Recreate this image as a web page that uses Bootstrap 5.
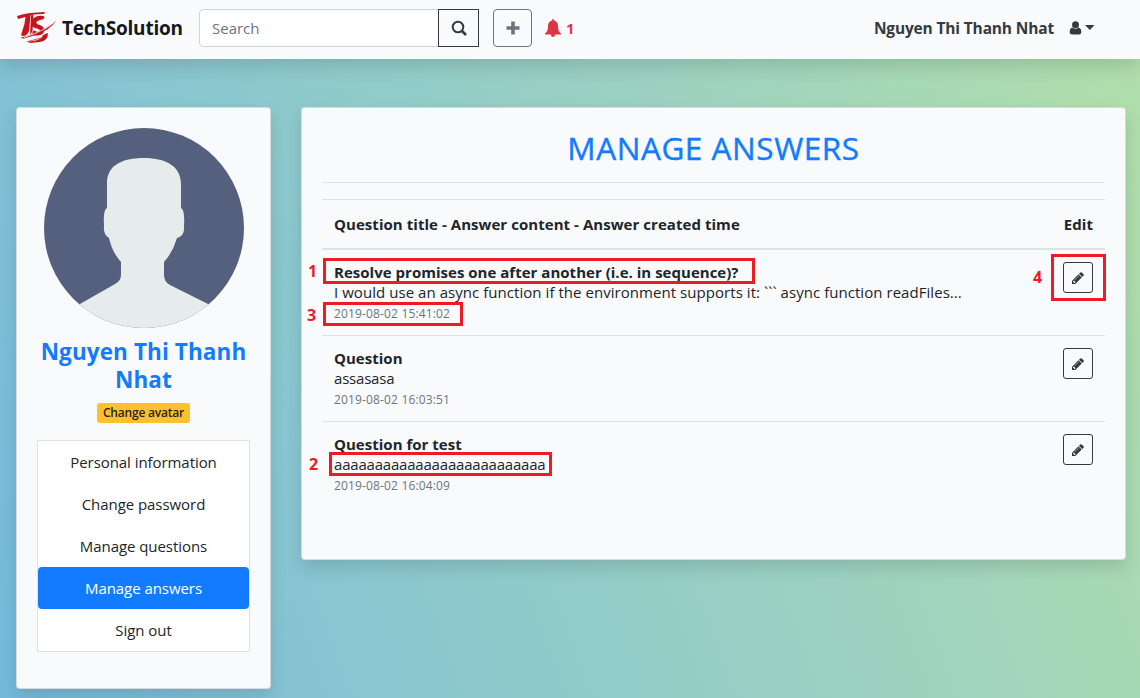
<!DOCTYPE html>
<html lang="en">
<head>
<meta charset="utf-8">
<meta name="viewport" content="width=device-width, initial-scale=1">
<title>TechSolution</title>
<link href="https://cdn.jsdelivr.net/npm/bootstrap@5.3.0/dist/css/bootstrap.min.css" rel="stylesheet">
<style>
:root{--blue:#127bff;--ink:#212529;--dark:#343a40;--line:#dee2e6}
body{font-family:"Open Sans","Noto Sans",sans-serif;font-size:15px;letter-spacing:-.06px;line-height:24px;color:var(--ink);height:698px;overflow:hidden;background:linear-gradient(70deg,#74b9dd,#86c4d3 22%,#90cbc9 42%,#9dd2c0 65%,#b2dfa9)}
.topbar{height:59px;background:#f9fafc;padding-bottom:4px}
.brand-text{font-size:19px;font-weight:700;line-height:30px;color:#16181b;letter-spacing:-.2px;width:121px;white-space:nowrap;margin-left:5px}
.search-box{width:280px}
.search-box .form-control{height:38px;font-size:15px;letter-spacing:0;border-color:#ced4da;border-radius:4px 0 0 4px;padding:6px 12px}
.search-box .form-control::placeholder{color:#6c757d}
.btn-find{width:41px;height:38px;border:1px solid var(--dark);border-radius:0;padding:0}
.btn-plus{width:39px;height:38px;border:1px solid #6c757d;border-radius:4px;padding:0;margin-left:14px}
.alerts{color:#dc3545;margin-left:12px}
.user-name{font-weight:700;color:var(--dark);font-size:15.500px;letter-spacing:-.16px;padding-top:1px}
.user-icon{margin:0 45px 0 15px}
.page-body{padding:48px 0 0 16px;gap:30px}
.panel{background:#f9fafc;border:1px solid rgba(0,0,0,.125);border-radius:4px;padding:20px}
.side{width:255px;height:582px}
.main-panel{width:825px;height:453px}
.side-name{font-size:22.500px;line-height:28px;font-weight:700;color:var(--blue);letter-spacing:.1px;padding-top:2px}
.avatar-btn{background:#ffc02c;color:var(--ink);font-size:12px;line-height:20px;height:20px;width:93px;border-radius:3px;font-weight:600;padding:0;border:0;letter-spacing:-.2px;margin-top:9px}
.side-menu{border:1px solid var(--line);background:#fff;margin-top:17px}
.side-menu .nav-link{color:var(--ink);padding:9px 0;line-height:24px;border-radius:4px}
.side-menu .nav-link.active{background:var(--blue);color:#fff}
.page-title{font-size:31.500px;line-height:38px;color:var(--blue);margin:1px 0 15px;letter-spacing:.55px;font-weight:500;-webkit-text-stroke:.4px var(--blue)}
.rule{border-top:1px solid var(--line);height:17px}
.head-row{border-top:1px solid var(--line);border-bottom:2px solid var(--line);height:51px;font-weight:700;padding:0 12px;letter-spacing:.05px}
.answer{height:86px;padding:12px;border-bottom:1px solid var(--line)}
.answer.last-answer{border-bottom:0}
.answer .txt{line-height:18px;letter-spacing:-.2px}
.answer .txt.long-text{letter-spacing:.05px}
.answer .ttl{font-weight:700;line-height:21px;letter-spacing:.02px}
.answer .time{font-size:12px;color:#6c757d;line-height:26px;letter-spacing:.15px}
.btn-edit{width:30px;height:31px;border:1px solid var(--dark);border-radius:3px;padding:0;background:transparent}
.mark-box{position:absolute;border:3px solid #ed1c24}
.mark-num{position:absolute;color:#ed1c24;font-weight:700;font-size:16px;line-height:20px}
</style>
<script src="https://cdn.jsdelivr.net/npm/bootstrap@5.3.0/dist/js/bootstrap.bundle.min.js"></script>
</head>
<body>
<svg class="d-none"><symbol id="pencil" viewBox="0 0 1536 1536"><path d="M363 1408l91-91-235-235-91 91v107h128v128zM886 480q0-22-22-22-10 0-17 7l-542 542q-7 7-7 17 0 22 22 22 10 0 17-7l542-542q7-7 7-17zM832 288l416 416-832 832H0v-416zM1515 384q0 53-37 90l-166 166-416-416 166-165q36-38 90-38 53 0 91 38l235 234q37 39 37 91z"/></symbol></svg>
<nav class="topbar shadow d-flex align-items-center position-relative">
  <svg class="ms-3" width="41" height="34" viewBox="0 1 41 34" fill="#c4161f">
    <path d="M1 6Q7 4 14 3L29 2 28 4Q21 4 14.500 5L13 21Q11 26 7 26 4 26 6 22 9 14 9.500 7L2 9Z"/>
    <path d="M27 6Q30 7 27 9.500Q22 10 20.500 12Q19.500 14 24 15Q29 17 28 22Q26 26 19 25.500Q15 24 17 21Q19 20 21 22L24 21Q24 19 19 18Q13 16 16 10Q20 5 27 6Z"/>
    <path d="M40 11Q35 19 20 25L8 28.500 4 28Q18 24 28 19Q35 15 40 11ZM32 23Q32 31 24 32L14 33 10 31Q13 32 20 30.500Q26 29 27 25ZM15 5h2.500L16.500 21 14 25Z"/>
    <path fill="none" stroke="#f9fafc" stroke-width=".8" d="M38 12.500Q30 20 8 27.500"/>
    <path fill="none" stroke="#c4161f" stroke-width=".7" d="M12 31.500L29 27"/>
  </svg>
  <span class="brand-text">TechSolution</span>
  <div class="search-box input-group ms-3"><input class="form-control" placeholder="Search"><button class="btn btn-find d-flex align-items-center justify-content-center" aria-label="Search"><svg width="16" height="16" viewBox="0 0 16 16" fill="none" stroke="#343a40"><circle cx="7" cy="7" r="5.300" stroke-width="2"/><path d="M11 11l4 4" stroke-width="2.600"/></svg></button></div>
  <button class="btn btn-plus d-flex align-items-center justify-content-center" aria-label="Add"><svg width="14" height="14" viewBox="0 0 14 14" fill="#6c757d"><path d="M5.200.500h3.600v4.700H13.500v3.600H8.800V13.500H5.200V8.800H.500V5.200h4.700z"/></svg></button>
  <span class="alerts d-flex align-items-center fw-bold"><svg class="me-1" width="18" height="18" viewBox="0 0 18 18" fill="#dc3545"><path d="M9 0Q10.200 0 10 1.500Q14 2.500 14 7Q14 12.500 17 14.500V15.500H1V14.500Q4 12.500 4 7Q4 2.500 8 1.500Q7.800 0 9 0ZM6.800 15.500H11.200Q11 18 9 18T6.800 15.500Z"/></svg>1</span>
  <span class="user-name ms-auto">Nguyen Thi Thanh Nhat</span>
  <svg class="user-icon" width="26" height="14" viewBox="0 0 26 14" fill="#343a40"><circle cx="6.500" cy="3.700" r="3.500"/><path d="M3.200 6.500Q6.500 9 9.800 6.500Q12.500 7.500 12.300 11.500Q12 13.500 10 13.500H3Q1 13.500.7 11.500Q.5 7.500 3.200 6.500ZM16 4H25.500L20.800 9Z"/></svg>
</nav>
<main class="page-body d-flex align-items-start">
  <aside class="panel side shadow text-center">
    <svg class="d-block mx-auto" width="200" height="200" viewBox="0 0 200 200"><defs><clipPath id="round"><circle cx="100" cy="100" r="100"/></clipPath></defs><g clip-path="url(#round)"><path fill="#55607e" d="M0 0h200v200H0z"/><path fill="#e6ecec" d="M63 55C63 38 77 30 100 30S137 39 137 56V80Q141 82 140 98 141 108 133 110Q129 124 120 134V147Q120 154 126 157L164 176 200 220H0L36 176 71 156Q77 153 77 147V134Q68 124 65 110 59 107 60 97 59 82 63 80Z"/></g></svg>
    <h4 class="side-name mt-2 mb-0">Nguyen Thi Thanh Nhat</h4>
    <button class="btn avatar-btn d-block mx-auto">Change avatar</button>
    <nav class="nav flex-column side-menu">
      <a class="nav-link" href="#">Personal information</a>
      <a class="nav-link" href="#">Change password</a>
      <a class="nav-link" href="#">Manage questions</a>
      <a class="nav-link active" href="#">Manage answers</a>
      <a class="nav-link" href="#">Sign out</a>
    </nav>
  </aside>
  <section class="panel main-panel shadow position-relative">
    <h2 class="page-title text-center">MANAGE ANSWERS</h2>
    <div class="rule"></div>
    <div class="head-row d-flex justify-content-between align-items-center"><span>Question title - Answer content - Answer created time</span><span>Edit</span></div>
    <div class="answer d-flex justify-content-between align-items-start"><div><div class="ttl">Resolve promises one after another (i.e. in sequence)?</div><div class="txt long-text">I would use an async function if the environment supports it: ``` async function readFiles...</div><div class="time">2019-08-02 15:41:02</div></div><button class="btn btn-edit d-flex align-items-center justify-content-center" aria-label="Edit"><svg width="12" height="12" fill="#343a40"><use href="#pencil"/></svg></button></div>
    <div class="answer d-flex justify-content-between align-items-start"><div><div class="ttl">Question</div><div class="txt">assasasa</div><div class="time">2019-08-02 16:03:51</div></div><button class="btn btn-edit d-flex align-items-center justify-content-center" aria-label="Edit"><svg width="12" height="12" fill="#343a40"><use href="#pencil"/></svg></button></div>
    <div class="answer last-answer d-flex justify-content-between align-items-start"><div><div class="ttl">Question for test</div><div class="txt">aaaaaaaaaaaaaaaaaaaaaaaaaa</div><div class="time">2019-08-02 16:04:09</div></div><button class="btn btn-edit d-flex align-items-center justify-content-center" aria-label="Edit"><svg width="12" height="12" fill="#343a40"><use href="#pencil"/></svg></button></div>
    <span class="mark-box" style="left:21px;top:150px;width:432px;height:26px"></span>
    <span class="mark-box" style="left:21px;top:194px;width:140px;height:24px"></span>
    <span class="mark-box" style="left:27px;top:344px;width:223px;height:24px"></span>
    <span class="mark-box" style="left:749px;top:146px;width:55px;height:47px"></span>
    <span class="mark-num" style="left:6px;top:153px">1</span>
    <span class="mark-num" style="left:5px;top:197px">3</span>
    <span class="mark-num" style="left:7px;top:346px">2</span>
    <span class="mark-num" style="left:731px;top:159px">4</span>
  </section>
</main>
</body>
</html>
